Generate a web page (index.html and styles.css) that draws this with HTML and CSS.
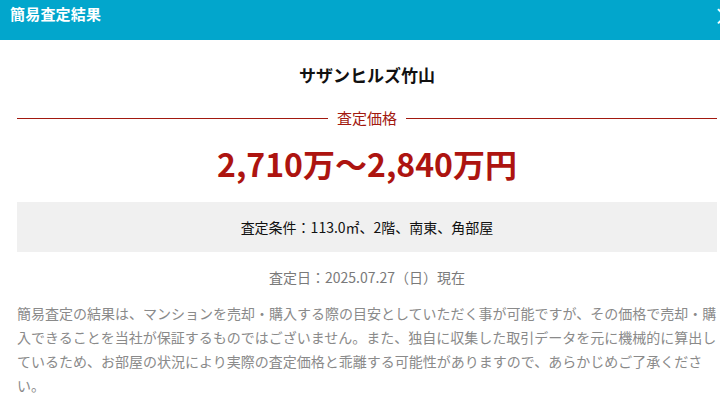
FILE: index.html
```html
<!DOCTYPE html>
<html lang="ja">
<head>
<meta charset="utf-8">
<link rel="stylesheet" href="styles.css">
</head>
<body>
<div class="modal">
  <div class="modal-header">
    <span class="modal-title">簡易査定結果</span>
    <span class="modal-close">×</span>
  </div>
  <div class="modal-body">
    <h2 class="name">サザンヒルズ竹山</h2>
    <div class="label-row">
      <span class="rule"></span>
      <span class="label">査定価格</span>
      <span class="rule"></span>
    </div>
    <p class="price">2,710万～2,840万円</p>
    <div class="conditions">査定条件：113.0㎡、2階、南東、角部屋</div>
    <p class="date">査定日：2025.07.27（日）現在</p>
    <p class="note">簡易査定の結果は、マンションを売却・購入する際の目安としていただく事が可能ですが、その価格で売却・購入できることを当社が保証するものではございません。また、独自に収集した取引データを元に機械的に算出しているため、お部屋の状況により実際の査定価格と乖離する可能性がありますので、あらかじめご了承ください。</p>
  </div>
</div>
</body>
</html>
```

FILE: styles.css
```css
html, body {
  margin: 0;
  padding: 0;
  background: #ffffff;
  overflow: hidden;
  width: 720px;
  height: 415px;
}

body {
  font-family: "Noto Sans CJK JP", "Noto Sans", sans-serif;
}

.modal {
  width: 734px;
  position: relative;
}

.modal-header {
  height: 40px;
  background: #02a6cc;
  color: #ffffff;
  display: flex;
  align-items: flex-start;
  padding: 0 10px;
  box-sizing: border-box;
  position: relative;
}

.modal-title {
  font-size: 15px;
  font-weight: 700;
  line-height: 28px;
  letter-spacing: 0.2px;
}

.modal-close {
  position: absolute;
  left: 713px;
  top: 1px;
  font-size: 24px;
  line-height: 28px;
  color: #ffffff;
}

.modal-body {
  padding: 23px 17px 0;
  display: flex;
  flex-direction: column;
}

.name {
  margin: 0;
  font-size: 17px;
  font-weight: 700;
  line-height: 24px;
  text-align: center;
  color: #111111;
}

.label-row {
  margin-top: 19px;
  display: flex;
  align-items: center;
  gap: 9px;
  height: 24px;
}

.rule {
  flex: 1;
  height: 1px;
  background: #a2190f;
}

.label {
  font-size: 15px;
  color: #a2190f;
  line-height: 24px;
}

.price {
  margin: 11px 0 0;
  font-size: 32px;
  font-weight: 700;
  line-height: 44px;
  text-align: center;
  color: #ad1410;
}

.conditions {
  margin-top: 17px;
  height: 50px;
  background: #f0f0f0;
  display: flex;
  align-items: center;
  justify-content: center;
  font-size: 14px;
  color: #111111;
}

.date {
  margin: 13px 0 0;
  font-size: 14px;
  line-height: 24px;
  text-align: center;
  color: #7a7a7a;
}

.note {
  margin: 12px 0 0;
  font-size: 14px;
  line-height: 24px;
  color: #8a8a8a;
  line-break: strict;
}
```
